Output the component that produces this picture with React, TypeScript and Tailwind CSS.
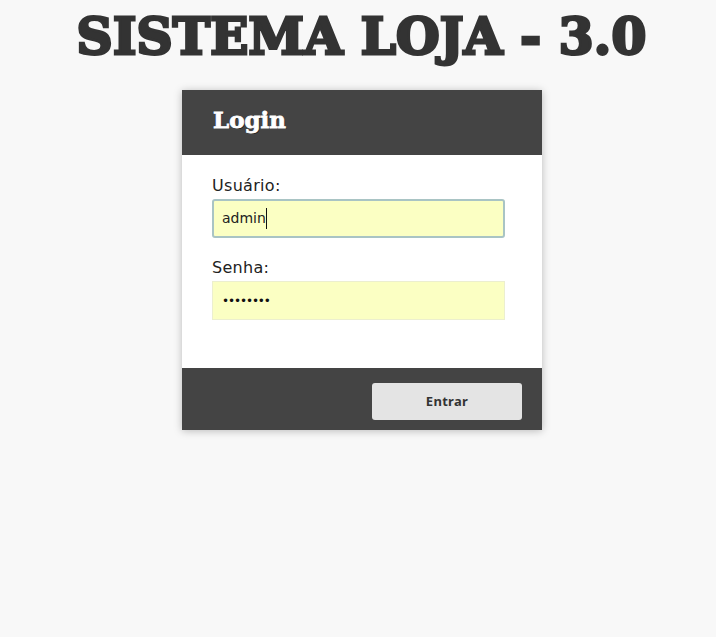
export default function App() {
  return (
    <div className="min-h-[637px] bg-[#f8f8f8] flex flex-col items-center pl-[7px] font-['DejaVu_Sans',sans-serif]">
      <h1 className="h-[90px] pt-[8px] text-center whitespace-nowrap text-[50px] leading-[58px] tracking-[0.2px] font-bold text-[#333] font-['DejaVu_Serif',serif] [-webkit-text-stroke:3px_#333]">
        SISTEMA LOJA - 3.0
      </h1>

      <div className="w-[360px] ml-[1px] h-[340px] flex flex-col bg-white shadow-[0_1px_8px_rgba(0,0,0,0.25)]">
        {/* Header */}
        <div className="h-[65px] shrink-0 bg-[#444] flex items-center pl-[31px] pb-[5px]">
          <h2 className="text-[23px] font-bold text-white font-['DejaVu_Serif',serif] [-webkit-text-stroke:0.8px_#fff] [text-shadow:1px_1px_0_#222]">
            Login
          </h2>
        </div>

        {/* Form */}
        <div className="flex-1 pt-[20px] pl-[30px] pr-[37px]">
          <label className="block h-[24px] text-[16px] leading-[22px] tracking-[0.3px] text-[#222]">Usuário:</label>
          <div className="h-[39px] flex items-center pl-[8px] bg-[#fbffc3] border-2 border-[#a9c4c4] rounded-[3px] text-[14px] text-[#222]">
            admin<span className="w-px h-[21px] bg-[#111]" />
          </div>
          <label className="block h-[24px] mt-[19px] text-[16px] leading-[22px] tracking-[0.3px] text-[#222]">Senha:</label>
          <div className="h-[39px] flex items-center pl-[9px] bg-[#fbffc3] border border-[#ecefcf] text-[#111] text-[12px] tracking-[-1.1px]">
            ••••••••
          </div>
        </div>

        {/* Footer */}
        <div className="h-[62px] shrink-0 bg-[#444] flex items-center justify-end pr-[20px] pt-[5px]">
          <button className="w-[150px] h-[37px] rounded-[3px] bg-[#e4e4e4] text-[13px] font-bold tracking-[0.3px] text-[#333] font-['Noto_Sans',sans-serif]">
            Entrar
          </button>
        </div>
      </div>
    </div>
  );
}
